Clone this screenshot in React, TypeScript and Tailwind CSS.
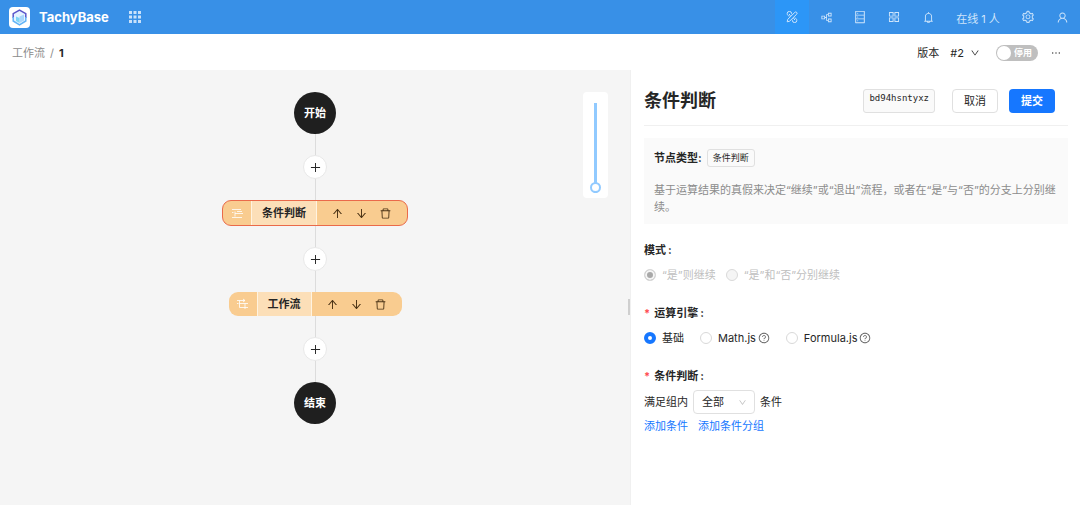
import type { ReactNode } from 'react'
import {
  AiOutlineAppstore,
  AiOutlineArrowDown,
  AiOutlineArrowUp,
  AiOutlineBell,
  AiOutlineDatabase,
  AiOutlineDelete,
  AiOutlineDown,
  AiOutlineEllipsis,
  AiOutlinePartition,
  AiOutlinePlus,
  AiOutlineQuestionCircle,
  AiOutlineSetting,
  AiOutlineUser,
} from 'react-icons/ai'

function Logo() {
  return (
    <svg viewBox="0 0 21 21" className="size-[21px] shrink-0" aria-hidden="true">
      <rect width="21" height="21" rx="4" fill="#fff" />
      <path d="M10.5 3 16.8 6.6V14L10.5 17.8 4.2 14V6.6Z" fill="#e6f3ff" />
      <path d="M10.5 9.6 15 7.4V13.6L10.5 16Z" fill="#a9d6fa" />
      <path d="M7 9.4 10.5 11V16L7 14Z" fill="#7fd6f5" />
      <path d="M4.2 11V6.7L10.5 3 16.8 6.7V11" fill="none" stroke="#5b55c9" strokeWidth="1.5" />
      <path d="M4.2 10V14L10.5 17.8 16.8 14V10" fill="none" stroke="#62b4f7" strokeWidth="1.5" />
    </svg>
  )
}

function GridIcon() {
  return (
    <svg viewBox="0 0 12 12" className="size-3" fill="#c9e1fa" aria-hidden="true">
      {[0, 4.5, 9].map((y) => [0, 4.5, 9].map((x) => <rect key={`${x}-${y}`} x={x} y={y} width="3" height="3" />))}
    </svg>
  )
}

function DesignIcon() {
  return (
    <svg viewBox="0 0 12 12" className="size-3" fill="none" stroke="currentColor" strokeWidth="1" aria-hidden="true">
      <path d="M5.6 3.2V2.6A2.2 2.2 0 0 0 1.2 2.6C1.2 4 2.2 5 3.6 5M6.4 8.8V9.4A2.2 2.2 0 0 0 10.8 9.4C10.8 8 9.8 7 8.4 7M3 3l1.6 1.6M7.4 7.4 9 9" />
      <path d="M1.2 10.8 1.7 8.4 8.8 1.4A1.3 1.3 0 0 1 10.7 3.2L3.6 10.2Z" />
    </svg>
  )
}

function ConditionIcon() {
  return (
    <svg viewBox="0 0 11 11" className="size-[11px]" fill="none" stroke="#fff" strokeWidth="1" aria-hidden="true">
      <path d="M0 1.5H9M3 5.5H11M3 8.5V3.5M0 9.5H10M5 3.5H10M0 4.5H1.5" opacity="0.8" />
    </svg>
  )
}

function SubflowIcon() {
  return (
    <svg viewBox="0 0 12 12" className="size-3" fill="none" stroke="#fff" strokeWidth="1" aria-hidden="true">
      <path d="M0 2.5H8M2.5 2.5V9.5H11M2.5 5.5H11M6 1 8 2.5 6 4M0 5.5H1.5M8 5.5V11" opacity="0.8" />
    </svg>
  )
}

type HeaderButtonProps = { label: string; active?: boolean; children: ReactNode }

function HeaderButton({ label, active, children }: HeaderButtonProps) {
  return (
    <button
      aria-label={label}
      className={`flex h-full w-[34px] items-center justify-center text-[13px] text-[#cfe5fb] ${active ? 'bg-[#2c96f7]' : ''}`}
    >
      {children}
    </button>
  )
}

function Header() {
  return (
    <header className="flex h-[34px] items-center justify-between bg-[#3890e7] pr-px pl-[9px]">
      <div className="flex items-center">
        <Logo />
        <span className="ml-[9px] text-[13px] font-bold text-white">TachyBase</span>
        <button aria-label="应用" className="ml-5">
          <GridIcon />
        </button>
      </div>
      <nav className="flex h-full items-center">
        <HeaderButton label="设计" active><DesignIcon /></HeaderButton>
        <HeaderButton label="工作流"><AiOutlinePartition /></HeaderButton>
        <HeaderButton label="数据源"><AiOutlineDatabase size={14} /></HeaderButton>
        <HeaderButton label="插件"><AiOutlineAppstore size={14} /></HeaderButton>
        <HeaderButton label="通知"><AiOutlineBell /></HeaderButton>
        <span className="w-[66px] pt-1 text-center text-[11px] text-[#cfe5fb]">在线 1 人</span>
        <HeaderButton label="设置"><AiOutlineSetting size={14} /></HeaderButton>
        <HeaderButton label="用户"><AiOutlineUser /></HeaderButton>
      </nav>
    </header>
  )
}

function Toolbar() {
  return (
    <div className="flex h-9 items-center justify-between bg-white pt-px pr-[18px] pl-3">
      <div className="flex items-center gap-[5px]">
        <a href="#" className="text-[#8c8c8c]">工作流</a>
        <span className="text-[#8c8c8c]">/</span>
        <span className="font-bold">1</span>
      </div>
      <div className="flex items-center">
        <span>版本</span>
        <button className="ml-[11px] flex items-center gap-[6px]">
          #2 <AiOutlineDown className="size-[10px]" />
        </button>
        <button
          role="switch"
          aria-checked="false"
          className="ml-4 flex h-4 w-[42px] items-center justify-between rounded-full bg-[#bfbfbf] pr-[6px] pl-px text-[9px] font-bold text-white"
        >
          <span className="size-[14px] rounded-full bg-white" />
          停用
        </button>
        <button aria-label="更多" className="ml-3">
          <AiOutlineEllipsis className="size-3" />
        </button>
      </div>
    </div>
  )
}

function Line() {
  return <div className="h-[21px] w-px bg-[#dcdcdc]" />
}

function AddNode() {
  return (
    <>
      <Line />
      <button
        aria-label="添加节点"
        className="flex size-6 items-center justify-center rounded-full border border-[#e8e8e8] bg-white text-[13px]"
      >
        <AiOutlinePlus />
      </button>
      <Line />
    </>
  )
}

function Terminal({ label }: { label: string }) {
  return (
    <div className="flex size-[42px] items-center justify-center rounded-full bg-[#1f1f1f] font-bold text-white">
      {label}
    </div>
  )
}

type FlowNodeProps = { title: string; icon: ReactNode; selected?: boolean }

function FlowNode({ title, icon, selected }: FlowNodeProps) {
  return (
    <div
      className={`flex items-stretch overflow-hidden rounded-[9px] bg-[#f9cc90] ${selected ? 'border border-[#ea6a4a]' : ''}`}
    >
      <div className="flex w-7 items-center justify-center">{icon}</div>
      <div className="flex h-6 items-center border-x border-[#fff3e0] bg-[#fcdfb8] px-[10px] font-bold">{title}</div>
      <div className="flex w-[90px] items-center gap-[11px] pl-[14px] text-[13px] text-[#4a3214]">
        <button aria-label="上移"><AiOutlineArrowUp /></button>
        <button aria-label="下移"><AiOutlineArrowDown /></button>
        <button aria-label="删除"><AiOutlineDelete /></button>
      </div>
    </div>
  )
}

function Canvas() {
  return (
    <main className="relative w-7/12 bg-[#f5f5f5] pt-[22px]">
      <div className="flex flex-col items-center">
        <Terminal label="开始" />
        <AddNode />
        <FlowNode title="条件判断" icon={<ConditionIcon />} selected />
        <AddNode />
        <FlowNode title="工作流" icon={<SubflowIcon />} />
        <AddNode />
        <Terminal label="结束" />
      </div>
      <div className="absolute top-[22px] right-[22px] flex rounded-[4px] bg-white px-[7px] pt-[11px] pb-[5px]">
        <input
          type="range"
          aria-label="缩放"
          min={10}
          max={100}
          defaultValue={100}
          className="h-[90px] w-[11px] appearance-none bg-transparent [writing-mode:vertical-lr] [&::-webkit-slider-runnable-track]:w-[3px] [&::-webkit-slider-runnable-track]:bg-[#91caff] [&::-webkit-slider-thumb]:ml-[-4px] [&::-webkit-slider-thumb]:size-[11px] [&::-webkit-slider-thumb]:appearance-none [&::-webkit-slider-thumb]:rounded-full [&::-webkit-slider-thumb]:border-2 [&::-webkit-slider-thumb]:border-[#91caff] [&::-webkit-slider-thumb]:bg-white"
        />
      </div>
      <div className="absolute top-[229px] right-0 h-4 w-[2px] bg-[#cfcfcf]" />
    </main>
  )
}

type RadioProps = { name: string; label: string; checked?: boolean; disabled?: boolean; help?: boolean }

function Radio({ name, label, checked, disabled, help }: RadioProps) {
  return (
    <label className={`flex items-center ${disabled ? 'text-[#bfbfbf]' : ''}`}>
      <input
        type="radio"
        name={name}
        defaultChecked={checked}
        disabled={disabled}
        className="mr-[6px] size-3 appearance-none rounded-full border border-[#d9d9d9] bg-white checked:border-4 checked:border-[#1677ff] disabled:bg-[#f5f5f5] disabled:checked:border disabled:checked:border-[#d9d9d9] disabled:checked:bg-[#a8a8a8] disabled:checked:shadow-[inset_0_0_0_2px_#f5f5f5]"
      />
      {label}
      {help && <AiOutlineQuestionCircle className="ml-[2px] size-3 text-[#666666]" />}
    </label>
  )
}

function FieldTitle({ title, required }: { title: string; required?: boolean }) {
  return (
    <legend className="flex h-4 items-center font-bold">
      {required && <span className="mr-1 text-[#ff4d4f]">*</span>}
      {title}
      <span className="ml-[2px]">:</span>
    </legend>
  )
}

function ConfigPanel() {
  return (
    <aside className="w-5/12 border-l border-[#f0f0f0] bg-white pr-3 pl-[13px]">
      <div className="flex h-14 items-center border-b border-[#f0f0f0] pt-[7px] pr-[13px]">
        <h1 className="flex-1 text-[18px] leading-6 font-bold">条件判断</h1>
        <code className="h-6 rounded-[3px] border border-[#e0e0e0] bg-[#fafafa] px-[5px] font-['DejaVu_Sans_Mono',monospace] text-[9px] leading-4">
          bd94hsntyxz
        </code>
        <button className="ml-[17px] h-6 w-[46px] rounded-[4px] border border-[#e0e0e0]">取消</button>
        <button className="ml-[11px] h-6 w-[46px] rounded-[4px] bg-[#1677ff] font-bold text-white">提交</button>
      </div>

      <section className="mt-3 bg-[#fafafa] px-[10px] pt-[11px] pb-2">
        <div className="flex items-center">
          <span className="font-bold">节点类型:</span>
          <span className="ml-[5px] h-[18px] rounded-[3px] border border-[#e0e0e0] px-[5px] text-[9px] leading-4">条件判断</span>
        </div>
        <p className="mt-[15px] leading-[17px] text-[#8c8c8c]">
          基于运算结果的真假来决定“继续”或“退出”流程，或者在“是”与“否”的分支上分别继续。
        </p>
      </section>

      <form>
        <fieldset className="mt-[18px]">
          <FieldTitle title="模式" />
          <div className="mt-[9px] flex h-4 items-center gap-[10px]">
            <Radio name="mode" label="“是”则继续" checked disabled />
            <Radio name="mode" label="“是”和“否”分别继续" disabled />
          </div>
        </fieldset>
        <fieldset className="mt-[22px]">
          <FieldTitle title="运算引擎" required />
          <div className="mt-[9px] flex h-4 items-center gap-4">
            <Radio name="engine" label="基础" checked />
            <Radio name="engine" label="Math.js" help />
            <Radio name="engine" label="Formula.js" help />
          </div>
        </fieldset>
        <fieldset className="mt-[22px]">
          <FieldTitle title="条件判断" required />
          <div className="mt-[6px] flex items-center gap-[5px]">
            <label htmlFor="match">满足组内</label>
            <div className="relative">
              <select id="match" className="h-6 w-[62px] appearance-none rounded-[4px] border border-[#e0e0e0] bg-white px-2">
                <option>全部</option>
                <option>任意</option>
              </select>
              <AiOutlineDown className="pointer-events-none absolute top-2 right-2 size-[9px] text-[#bfbfbf]" />
            </div>
            <span>条件</span>
          </div>
          <div className="mt-1 flex gap-[10px] text-[#1677ff]">
            <a href="#">添加条件</a>
            <a href="#">添加条件分组</a>
          </div>
        </fieldset>
      </form>
    </aside>
  )
}

export default function App() {
  return (
    <div className="flex min-h-screen flex-col font-[Inter,'Noto_Sans_CJK_SC',sans-serif] text-[11px] leading-4 text-[#262626]">
      <Header />
      <Toolbar />
      <div className="flex flex-1">
        <Canvas />
        <ConfigPanel />
      </div>
    </div>
  )
}
